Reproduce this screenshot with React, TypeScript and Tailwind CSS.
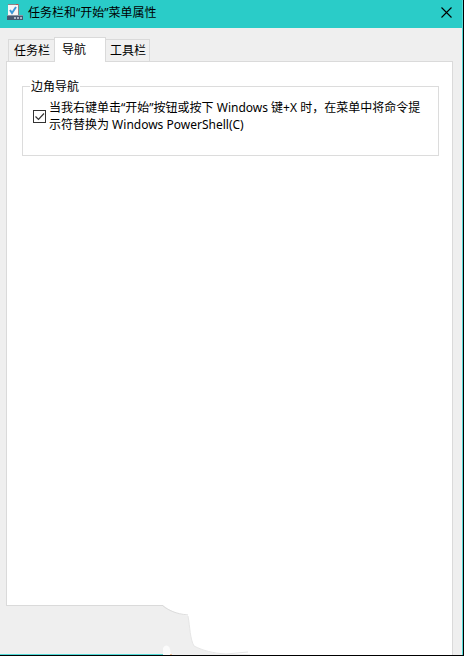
import { useState } from "react";

const tabs = ["任务栏", "导航", "工具栏"];

function TaskbarIcon() {
  return (
    <svg width="16" height="16" viewBox="0 0 16 16" shapeRendering="crispEdges" aria-hidden="true">
      <rect x="1" y="0" width="11" height="12" fill="#8b8388" />
      <rect x="1" y="1" width="10" height="10" fill="#f7f5f6" />
      <rect x="9" y="0" width="2" height="1" fill="#c0504d" />
      <path d="M3 6l2 3 4-6" fill="none" stroke="#3a97d8" strokeWidth="2" shapeRendering="auto" />
      <rect x="0" y="11" width="16" height="1" fill="#8a93a3" />
      <rect x="0" y="12" width="16" height="4" fill="#46566f" />
      <rect x="7" y="13" width="2" height="2" fill="#a9b4c4" />
      <rect x="10" y="13" width="2" height="2" fill="#a9b4c4" />
      <rect x="13" y="13" width="2" height="2" fill="#a9b4c4" />
    </svg>
  );
}

function TitleBar() {
  return (
    <header className="flex h-7 items-start bg-[#2accc8] pl-[7px] pr-[10px]">
      <div className="flex h-6 flex-1 items-center">
        <TaskbarIcon />
        <h1 className="ml-[5px] pt-px">任务栏和“开始”菜单属性</h1>
      </div>
      <button type="button" aria-label="关闭" className="flex h-6 w-[11px] items-center justify-center">
        <svg width="11" height="11" viewBox="0 0 11 11" aria-hidden="true">
          <path d="M0.5 0.5l10 10M10.5 0.5l-10 10" stroke="#000" strokeWidth="1.1" fill="none" />
        </svg>
      </button>
    </header>
  );
}

function TornCorner() {
  return (
    <svg className="absolute bottom-0 left-0" width="252" height="50" viewBox="0 0 252 50" aria-hidden="true">
      <path d="M0 0H163C168 4 176 9 188 11C190 22 190 34 194 41C204 46 212 49 226 49H250V50H0Z" fill="#efefef" />
      <path d="M163 1C168 5 176 9 188 10" fill="none" stroke="#dcdcdc" />
      <path d="M188 11C190 22 190 34 194 41C204 46 212 48 226 49L248 47" fill="none" stroke="#e6e6e6" />
      <path d="M6 0.5H163" stroke="#dadada" />
      <path d="M0 49.5H163" stroke="#52d9d6" />
      <path d="M163 50V43C165 39 169 40 170 44L171 50Z" fill="#fbfbfb" />
      <path d="M170 49.5H172" stroke="#f3c49a" />
    </svg>
  );
}

export default function App() {
  const [active, setActive] = useState(1);
  const [checked, setChecked] = useState(true);

  return (
    <div className="flex min-h-screen flex-col border-b border-r border-black bg-[#efefef] font-['Noto_Sans','Noto_Sans_CJK_SC',sans-serif] text-xs text-black">
      <div className="relative flex flex-1 flex-col border-r border-[#52d9d6]">
        <TitleBar />
        <main className="flex flex-1 flex-col pl-[6px] pr-[9px] pt-[9px]">
          <div role="tablist" className="flex items-end pl-[2px]">
            {tabs.map((name, i) => (
              <button
                key={name}
                type="button"
                role="tab"
                aria-selected={i === active}
                onClick={() => setActive(i)}
                className={
                  i === active
                    ? "relative z-10 -mb-px flex h-[25px] w-[52px] items-center border border-b-0 border-[#dadada] bg-white pl-[7px]"
                    : "flex h-[22px] items-center border border-b-0 border-[#dadada] bg-[#f0f0f0] px-1 first:pl-[5px] first:border-r-0 last:border-l-0 last:pr-[3px]"
                }
              >
                {name}
              </button>
            ))}
          </div>
          <section role="tabpanel" className="flex-1 border-x border-t border-[#dadada] bg-white pl-[15px] pr-[13px] pt-4">
            <fieldset className="h-[78px] border border-[#dcdcdc] px-[7px]">
              <legend className="px-px leading-[17px]">边角导航</legend>
              <label className="flex items-center gap-[3px] pl-[3px] pt-1 leading-[17px]">
                <span className="relative h-[13px] w-[13px] shrink-0">
                  <input
                    type="checkbox"
                    checked={checked}
                    onChange={(e) => setChecked(e.target.checked)}
                    className="block h-[13px] w-[13px] appearance-none border border-[#333] bg-white"
                  />
                  {checked && (
                    <svg className="pointer-events-none absolute inset-0" width="13" height="13" viewBox="0 0 13 13" aria-hidden="true">
                      <path d="M2.5 6.5l3 3 5.5-6" fill="none" stroke="#333" strokeWidth="1.2" />
                    </svg>
                  )}
                </span>
                <span>当我右键单击“开始”按钮或按下 Windows 键+X 时，在菜单中将命令提示符替换为 Windows PowerShell(C)</span>
              </label>
            </fieldset>
          </section>
        </main>
        <TornCorner />
      </div>
    </div>
  );
}
